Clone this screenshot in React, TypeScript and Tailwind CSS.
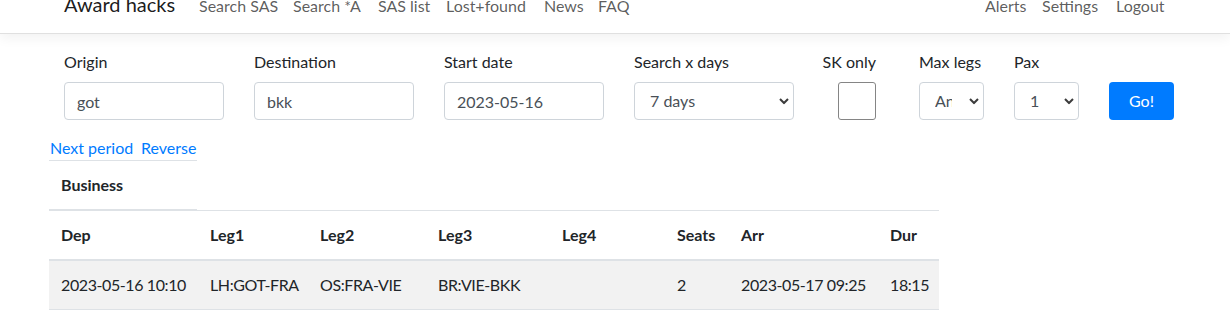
import React from 'react';

const navLinks = [
  { label: 'Search SAS', w: 'w-[94px]' },
  { label: 'Search *A', w: 'w-[85px]' },
  { label: 'SAS list', w: 'w-[68px]' },
  { label: 'Lost+found', w: 'w-[98px]' },
  { label: 'News', w: 'w-[54px]' },
  { label: 'FAQ', w: 'w-[46px]' },
];

const rightLinks = [
  { label: 'Alerts', w: 'w-[57px]' },
  { label: 'Settings', w: 'w-[74px]' },
  { label: 'Logout', w: 'w-[64px]' },
];

const columns = [
  { label: 'Dep', w: 'w-[149px]' },
  { label: 'Leg1', w: 'w-[110px]' },
  { label: 'Leg2', w: 'w-[118px]' },
  { label: 'Leg3', w: 'w-[124px]' },
  { label: 'Leg4', w: 'w-[115px]' },
  { label: 'Seats', w: 'w-[64px]' },
  { label: 'Arr', w: 'w-[149px]' },
  { label: 'Dur', w: 'w-[61px]' },
];

const rows = [
  ['2023-05-16 10:10', 'LH:GOT-FRA', 'OS:FRA-VIE', 'BR:VIE-BKK', '', '2', '2023-05-17 09:25', '18:15'],
];

const Chevron = () => (
  <svg
    className="pointer-events-none absolute right-[5px] top-1/2 -translate-y-1/2"
    width="10"
    height="7"
    viewBox="0 0 10 7"
    fill="none"
  >
    <path d="M1 1.5L5 5.5L9 1.5" stroke="#3c3c3c" strokeWidth="2" />
  </svg>
);

const Select = ({ value, options, className }: { value: string; options: string[]; className: string }) => (
  <div className={`relative ${className}`}>
    <select
      defaultValue={value}
      className="h-[38px] w-full appearance-none rounded border border-[#ced4da] bg-white pl-[15px] pr-[31px] text-[#495057] outline-none"
    >
      {options.map((o) => (
        <option key={o}>{o}</option>
      ))}
    </select>
    <Chevron />
  </div>
);

const Field = ({ label, children, className = '' }: { label: string; children: React.ReactNode; className?: string }) => (
  <div className={className}>
    <label className="mb-2 block leading-6">{label}</label>
    {children}
  </div>
);

const TextInput = ({ value }: { value: string }) => (
  <input
    defaultValue={value}
    className="h-[38px] w-full rounded border border-[#ced4da] bg-white px-3 text-[#495057] outline-none"
  />
);

export default function App() {
  return (
    <div className="min-h-screen bg-white text-[16px] text-[#212529] font-['Lato','Segoe_UI',sans-serif]">
      <div className="relative h-[34px] overflow-hidden border-b border-[#e0e0e0] shadow-[0_5px_12px_rgba(0,0,0,0.05)]">
        <div className="-mt-[11px] flex items-baseline whitespace-nowrap pl-[64px] pr-[58px]">
          <a className="w-[127px] shrink-0 text-[20px] leading-[30px] text-black/90">Award hacks</a>
          {navLinks.map((l) => (
            <a key={l.label} className={`${l.w} shrink-0 px-2 leading-6 text-black/65`}>
              {l.label}
            </a>
          ))}
          <div className="ml-auto flex items-baseline">
            {rightLinks.map((l) => (
              <a key={l.label} className={`${l.w} shrink-0 px-2 leading-6 text-black/65`}>
                {l.label}
              </a>
            ))}
          </div>
        </div>
      </div>

      <form className="mt-[16px] flex items-end gap-[30px] pl-[64px]">
        <Field label="Origin" className="w-[160px]">
          <TextInput value="got" />
        </Field>
        <Field label="Destination" className="w-[160px]">
          <TextInput value="bkk" />
        </Field>
        <Field label="Start date" className="w-[160px]">
          <TextInput value="2023-05-16" />
        </Field>
        <Field label="Search x days" className="w-[160px]">
          <Select value="7 days" options={['1 day', '3 days', '7 days', '14 days', '30 days']} className="w-full" />
        </Field>
        <div className="flex w-[52px] flex-col items-end">
          <label className="mb-2 block whitespace-nowrap leading-6">SK only</label>
          <input
            type="checkbox"
            className="h-[38px] w-[38px] appearance-none rounded-[3px] border border-[#858585] bg-white"
          />
        </div>
        <Field label="Max legs" className="ml-[13px] w-[65px] whitespace-nowrap">
          <Select value="Any" options={['Any', '1', '2', '3', '4']} className="w-full" />
        </Field>
        <Field label="Pax" className="w-[65px]">
          <Select value="1" options={['1', '2', '3', '4']} className="w-full" />
        </Field>
        <button type="button" className="h-[38px] w-[65px] rounded bg-[#007bff] leading-6 text-white">
          Go!
        </button>
      </form>

      <div className="ml-[49px] mt-[16px] w-[148px] border-b border-[#dee2e6] leading-6 text-[#007bff]">
        <a className="inline-block w-[92px] pl-px">Next period</a>
        <a>Reverse</a>
      </div>
      <div className="-mb-px ml-[49px] w-[148px] border-b-2 border-[#dee2e6] p-3 font-bold leading-6">Business</div>

      <table className="ml-[49px] w-[890px] table-fixed border-separate border-spacing-0">
        <thead>
          <tr>
            {columns.map((c) => (
              <th
                key={c.label}
                className={`${c.w} border-b-2 border-t border-[#dee2e6] p-3 text-left align-bottom font-bold leading-6`}
              >
                {c.label}
              </th>
            ))}
          </tr>
        </thead>
        <tbody>
          {rows.map((r, i) => (
            <tr key={i} className="bg-[#f2f2f2]">
              {r.map((cell, j) => (
                <td key={j} className="whitespace-nowrap border-b border-[#dee2e6] p-3 leading-6 tracking-[-0.4px]">
                  {cell}
                </td>
              ))}
            </tr>
          ))}
        </tbody>
      </table>
    </div>
  );
}
